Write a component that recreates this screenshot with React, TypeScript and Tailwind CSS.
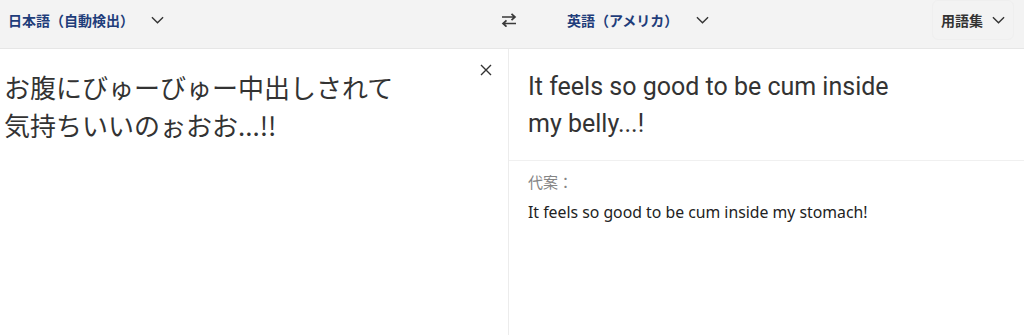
import React from "react";

const jp = { fontFamily: '"Noto Sans CJK JP", "Noto Sans", sans-serif' };

function Chevron({ className }: { className?: string }) {
  return (
    <svg viewBox="0 0 14 8" className={className} fill="none" stroke="currentColor" strokeWidth="1.5">
      <polyline points="1,1 7,7 13,1" />
    </svg>
  );
}

function SwapIcon() {
  return (
    <svg viewBox="0 0 16 14" className="w-4 h-[14px] text-[#3a3a3a]" fill="none" stroke="currentColor" strokeWidth="1.7">
      <path d="M1 4h13M10.5 0.8L14 4l-3.5 3.2" />
      <path d="M15 10.5H2M5.5 7.3L2 10.5l3.5 3.2" />
    </svg>
  );
}

function CloseIcon() {
  return (
    <svg viewBox="0 0 12 12" className="w-3 h-3 text-[#333]" fill="none" stroke="currentColor" strokeWidth="1.4">
      <path d="M1 1l10 10M11 1L1 11" />
    </svg>
  );
}

export default function App() {
  return (
    <div className="w-[1024px] h-[335px] bg-white overflow-hidden" style={jp}>
      <header className="h-[49px] bg-[#f3f3f3] border-b border-[#e6e6e6]">
        <div className="flex items-center h-10">
          <div className="w-[501px] flex items-center pl-2">
            <span className="text-[14px] font-semibold text-[#1f3d7a]">日本語（自動検出）</span>
            <Chevron className="w-[13px] h-[8px] ml-[17px] text-[#333]" />
          </div>
          <button className="flex items-center">
            <SwapIcon />
          </button>
          <div className="flex items-center ml-[50px]">
            <span className="text-[14px] font-semibold text-[#1f3d7a]">英語（アメリカ）</span>
            <Chevron className="w-[13px] h-[8px] ml-[18px] text-[#333]" />
          </div>
          <button className="ml-auto mr-[10px] h-10 px-2 flex items-center gap-[9px] rounded-md border border-[#efefef]">
            <span className="text-[14px] font-semibold text-[#333]">用語集</span>
            <Chevron className="w-[13px] h-[8px] text-[#333]" />
          </button>
        </div>
      </header>

      <div className="flex h-[286px]">
        <div className="relative w-[509px] border-r border-[#ececec]">
          <p className="w-[400px] pl-1 pt-[19px] text-[26px] leading-[38px] text-[#333]">
            お腹にびゅーびゅー中出しされて気持ちいいのぉおお...!!
          </p>
          <button className="absolute top-[15px] right-[16px]">
            <CloseIcon />
          </button>
        </div>

        <div className="flex-1">
          <div className="border-b border-[#f0f0f0] pl-[19px] pt-[19px] pb-[18px]">
            <p
              className="w-[390px] text-[25px] leading-[37px] text-[#333]"
              style={{ fontFamily: 'Roboto, "Noto Sans", sans-serif' }}
            >
              It feels so good to be cum inside my belly...!
            </p>
          </div>
          <div className="pl-[19px] pt-[11px]">
            <p className="text-[15px] leading-5 text-[#858585]">代案：</p>
            <p
              className="mt-[9px] text-[15.8px] leading-[22px] text-[#222]"
              style={{ fontFamily: '"Noto Sans", sans-serif' }}
            >
              It feels so good to be cum inside my stomach!
            </p>
          </div>
        </div>
      </div>
    </div>
  );
}
